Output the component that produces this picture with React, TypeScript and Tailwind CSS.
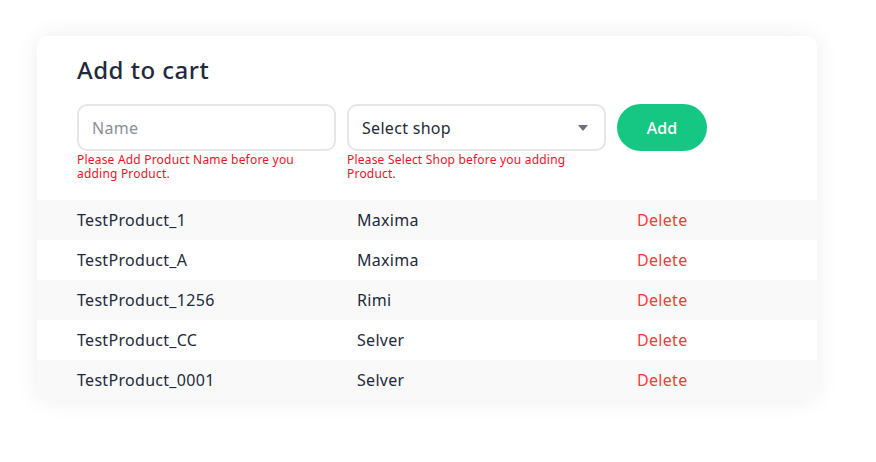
import { useState } from "react";

type Item = { name: string; shop: string };

const items: Item[] = [
  { name: "TestProduct_1", shop: "Maxima" },
  { name: "TestProduct_A", shop: "Maxima" },
  { name: "TestProduct_1256", shop: "Rimi" },
  { name: "TestProduct_CC", shop: "Selver" },
  { name: "TestProduct_0001", shop: "Selver" },
];

export default function App() {
  const [name, setName] = useState("");

  return (
    <div
      className="min-h-[462px] w-[876px] bg-white pt-9 pl-[37px]"
      style={{ fontFamily: '"Noto Sans", sans-serif' }}
    >
      <div className="w-[780px] overflow-hidden rounded-[10px] bg-white shadow-[0_0_24px_rgba(0,0,0,0.07)]">
        <div className="px-10 pt-[18px] pb-[19px]">
          <h1 className="text-[24px] leading-[32px] font-medium tracking-[0.5px] text-[#1f2a3c]">
            Add to cart
          </h1>
          <div className="mt-[18px] flex items-start gap-[11px]">
            <div className="w-[259px]">
              <input
                value={name}
                onChange={(e) => setName(e.target.value)}
                placeholder="Name"
                className="h-[47px] w-full rounded-[10px] border-2 border-[#e6e6e6] px-[13px] text-[16px] tracking-[0.3px] text-[#1f2a3c] placeholder:text-[#8a8f98] outline-none"
              />
              <p className="mt-[2px] text-[12px] leading-[14px] tracking-[0.2px] text-[#f50f2a]">
                Please Add Product Name before you adding Product.
              </p>
            </div>
            <div className="w-[259px]">
              <div className="flex h-[47px] w-full items-center justify-between rounded-[10px] border-2 border-[#e6e6e6] pr-[16px] pl-[13px] text-[16px] tracking-[0.3px] text-[#1f2a3c]">
                <span>Select shop</span>
                <svg width="10" height="6" viewBox="0 0 10 6">
                  <path d="M0 0h10L5 6z" fill="#6b6f76" />
                </svg>
              </div>
              <p className="mt-[2px] text-[12px] leading-[14px] tracking-[0.2px] text-[#f50f2a]">
                Please Select Shop before you adding Product.
              </p>
            </div>
            <button className="h-[47px] w-[90px] rounded-full bg-[#16c784] text-[16px] font-medium text-white">
              Add
            </button>
          </div>
        </div>
        <div>
          {items.map((it, i) => (
            <div
              key={it.name}
              className={`flex h-10 items-center pl-10 text-[16px] tracking-[0.3px] text-[#1f2a3c] ${
                i % 2 === 0 ? "bg-[#f9f9f9]" : "bg-white"
              }`}
            >
              <span className="w-[280px]">{it.name}</span>
              <span className="w-[280px]">{it.shop}</span>
              <button className="text-[#f5393c]">Delete</button>
            </div>
          ))}
        </div>
      </div>
    </div>
  );
}
